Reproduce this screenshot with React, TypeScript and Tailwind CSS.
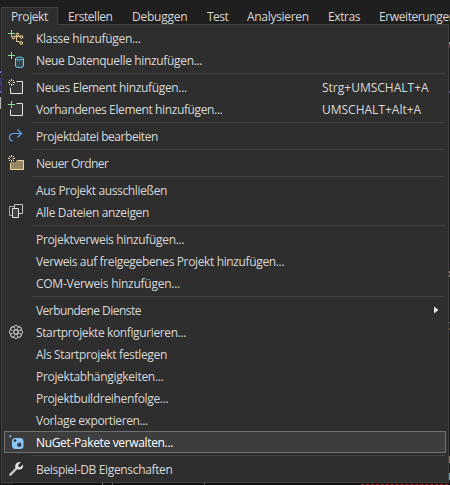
import React from "react";

const font = "font-['Open_Sans','Noto_Sans',sans-serif]";

type Item = { label: string; track: string; icon?: string; keys?: string; arrow?: boolean; active?: boolean };

const menuBar = [
  { label: "Erstellen", box: "w-[64px] tracking-[-0.45px]" },
  { label: "Debuggen", box: "w-[75px] tracking-[-0.25px]" },
  { label: "Test", box: "w-[40px] tracking-[-0.5px]" },
  { label: "Analysieren", box: "w-[81px] tracking-[-0.3px]" },
  { label: "Extras", box: "w-[51px] tracking-[-0.4px]" },
  { label: "Erweiterungen", box: "w-[80px] tracking-[-0.4px]" },
];

const groups: Item[][] = [
  [
    { label: "Klasse hinzufügen...", track: "tracking-[-0.3px]", icon: "class" },
    { label: "Neue Datenquelle hinzufügen...", track: "tracking-[-0.34px]", icon: "db" },
  ],
  [
    { label: "Neues Element hinzufügen...", track: "tracking-[-0.34px]", icon: "new", keys: "Strg+UMSCHALT+A" },
    { label: "Vorhandenes Element hinzufügen...", track: "tracking-[-0.38px]", icon: "existing", keys: "UMSCHALT+Alt+A" },
  ],
  [{ label: "Projektdatei bearbeiten", track: "tracking-[-0.44px]", icon: "redo" }],
  [{ label: "Neuer Ordner", track: "tracking-[-0.5px]", icon: "folder" }],
  [
    { label: "Aus Projekt ausschließen", track: "tracking-[-0.35px]" },
    { label: "Alle Dateien anzeigen", track: "tracking-[-0.34px]", icon: "files" },
  ],
  [
    { label: "Projektverweis hinzufügen...", track: "tracking-[-0.33px]" },
    { label: "Verweis auf freigegebenes Projekt hinzufügen...", track: "tracking-[-0.36px]" },
    { label: "COM-Verweis hinzufügen...", track: "tracking-[-0.26px]" },
  ],
  [
    { label: "Verbundene Dienste", track: "tracking-[-0.55px]", arrow: true },
    { label: "Startprojekte konfigurieren...", track: "tracking-[-0.38px]", icon: "gear" },
    { label: "Als Startprojekt festlegen", track: "tracking-[-0.36px]" },
    { label: "Projektabhängigkeiten...", track: "tracking-[-0.32px]" },
    { label: "Projektbuildreihenfolge...", track: "tracking-[-0.33px]" },
    { label: "Vorlage exportieren...", track: "tracking-[-0.39px]" },
    { label: "NuGet-Pakete verwalten...", track: "tracking-[-0.34px]", icon: "nuget", active: true },
  ],
  [{ label: "Beispiel-DB Eigenschaften", track: "tracking-[-0.34px]", icon: "wrench" }],
];

const Burst = () => (
  <path
    d="M3.500 0v2M3.500 5v2M0 3.500h2M5 3.500h2M1 1l1.400 1.400M4.600 4.600L6 6M6 1L4.600 2.400M2.400 4.600L1 6"
    stroke="#f3dfa8"
  />
);

const Plus = () => <path d="M3.500 0v7M0 3.500h7" stroke="#8ae28a" />;

function Icon({ name }: { name: string }) {
  return (
    <svg width="16" height="16" viewBox="0 0 16 16" fill="none" className="block">
      {name === "class" && (
        <>
          <path d="M6 7.500l4-3.500M8.500 6.500h4M8.500 6.500v5h3" stroke="#efd49a" />
          <circle cx="5.500" cy="7.500" r="1.400" fill="#5b5341" stroke="#efd49a" />
          <circle cx="9.500" cy="4.500" r="1.400" fill="#5b5341" stroke="#efd49a" />
          <circle cx="13.500" cy="7" r="1.400" fill="#5b5341" stroke="#efd49a" />
          <circle cx="13.200" cy="13" r="1.400" fill="#5b5341" stroke="#efd49a" />
          <Plus />
        </>
      )}
      {name === "db" && (
        <>
          <path d="M7.500 6.500v7.500c0 2 8 2 8 0V6.500" fill="#36474f" stroke="#72cdf0" />
          <ellipse cx="11.500" cy="6.500" rx="4" ry="1.400" fill="#2e4148" stroke="#72cdf0" />
          <Plus />
        </>
      )}
      {name === "new" && (
        <>
          <path d="M8 2.500h6.500v12h-12V8" fill="#383838" />
          <path d="M8.500 2.500h6v12h-12V8.500" stroke="#e2e2e2" />
          <Burst />
        </>
      )}
      {name === "existing" && (
        <>
          <path d="M8 2.500h6.500v12h-12V8" fill="#383838" />
          <path d="M8.500 2.500h6v12h-12V8.500" stroke="#e2e2e2" />
          <Plus />
        </>
      )}
      {name === "redo" && (
        <path d="M5 13C2.800 13 1.500 11.600 1.500 9.500C1.500 7 3 5.500 5.500 5.500H13M9.500 1.500l4 4-4 4" stroke="#5aa7ed" strokeWidth="1.200" />
      )}
      {name === "folder" && (
        <>
          <path d="M2.500 8v6.500h13v-9H10L8.500 7H4z" fill="#958564" />
          <path d="M2.500 8v6.500h13v-9H9.500L8 6.500" stroke="#f3d69b" />
          <Burst />
        </>
      )}
      {name === "files" && (
        <>
          <path d="M4 11.500H1.500v-9H6" stroke="#a8a8a8" />
          <path d="M6.500 4V.5h8v9H11" stroke="#c8c8c8" />
          <path d="M4.500 4.500h6v9h-6z" fill="#444" stroke="#e2e2e2" />
        </>
      )}
      {name === "gear" && (
        <g stroke="#e0e0e0">
          {[0, 45, 90, 135, 180, 225, 270, 315].map((a) => (
            <path key={a} transform={`rotate(${a} 8 8)`} d="M6 3.300C5.800.8 10.200.8 10 3.300L9.600 4.600" />
          ))}
          <circle cx="8" cy="8" r="2.300" strokeWidth="1.200" />
        </g>
      )}
      {name === "nuget" && (
        <>
          <circle cx="2.300" cy="2.300" r="1.200" fill="#5f9ccb" />
          <rect x="4" y="4" width="11.500" height="11" rx="3.500" fill="#8dcbfb" />
          <circle cx="7" cy="6.700" r="1.400" fill="#34414d" />
          <circle cx="11.300" cy="10.800" r="2.200" fill="#34414d" />
        </>
      )}
      {name === "wrench" && (
        <>
          <path d="M2.300 13.700L8.500 7.500" stroke="#c9c9c9" strokeWidth="2.400" strokeLinecap="round" />
          <path d="M12.800 1.300L10.300 3.800V6h2.200L15 3.500c.7 2.900-1.300 5.300-4.300 5.200L7.400 7C6.400 3.500 9.600.2 12.800 1.300z" fill="#e4e4e4" />
        </>
      )}
    </svg>
  );
}

const leftEdge = [
  { h: "h-[47px]", c: "bg-[#1f1f1f]" },
  { h: "h-[2px]", c: "bg-[#8060e0]" },
  { h: "h-[5px]", c: "bg-[#1f1f1f]" },
  { h: "h-[8px]", c: "bg-[#36386c]" },
  { h: "h-[5px]", c: "bg-[#28264a]" },
  { h: "h-[2px]", c: "bg-[#8060e0]" },
  { h: "h-[4px]", c: "bg-[#1f1f1f]" },
  { h: "h-[12px]", c: "bg-[#b0b0b0]" },
];

const rightEdge = [
  { h: "h-[18px]", c: "bg-[#141414]" },
  { h: "h-[2px]", c: "bg-[#a0a0a0]" },
  { h: "h-[4px]", c: "bg-[#654037]" },
  { h: "h-[43px]", c: "bg-[#171717]" },
  { h: "h-[2px]", c: "bg-[#5d4fa0]" },
  { h: "h-[178px]", c: "bg-[#161616]" },
  { h: "h-[2px]", c: "bg-[#9a8f88]" },
  { h: "h-[2px]", c: "bg-[#333333]" },
  { h: "h-[2px]", c: "bg-[#8a807a]" },
  { h: "h-[45px]", c: "bg-[#171717]" },
  { h: "h-[1px]", c: "bg-[#777777]" },
  { h: "h-[5px]", c: "bg-[#171717]" },
  { h: "h-[2px]", c: "bg-[#71452e]" },
  { h: "h-[126px]", c: "bg-[#161616]" },
  { h: "h-[7px]", c: "bg-[#92705e]" },
  { h: "h-[10px]", c: "bg-[#161616]" },
  { h: "h-[7px]", c: "bg-[#6e9bad]" },
];

export default function App() {
  return (
    <div className={`flex h-[485px] w-[450px] flex-col overflow-hidden bg-[#1f1f1f] text-[12px] leading-[18px] text-[#d8d8d8] ${font}`}>
      <div className="flex h-[25px] shrink-0 pt-[7px] pl-px whitespace-nowrap">
        <div className="z-10 h-[18px] w-[57px] shrink-0 border border-b-0 border-[#424242] bg-[#2e2e2e] pl-[9px] leading-[17px] tracking-[-0.4px]">Projekt</div>
        <div className="flex shrink-0 pl-[10px] leading-[19px]">
          {menuBar.map((m) => (
            <span key={m.label} className={`shrink-0 ${m.box}`}>{m.label}</span>
          ))}
        </div>
      </div>
      <div className="-mt-px flex h-[459px] shrink-0">
        <div className="w-px shrink-0">
          {leftEdge.map((s, i) => <div key={i} className={`${s.h} ${s.c}`} />)}
        </div>
        <div className="flex w-[448px] shrink-0 flex-col border border-[#424242] bg-[#2e2e2e] py-0.5">
          {groups.map((g, i) => (
            <React.Fragment key={i}>
              {i > 0 && (
                <div className="mr-[3px] ml-[30px] h-[5px] shrink-0 pt-0.5">
                  <div className="h-px bg-[#424242]" />
                </div>
              )}
              {g.map((it) => (
                <div
                  key={it.label}
                  className={`mr-0.5 ml-0.5 flex h-[22px] shrink-0 items-center ${it.active ? "bg-[#3d3d3d] text-white outline outline-1 -outline-offset-1 outline-[#707070]" : ""}`}
                >
                  <div className="ml-1 w-7">{it.icon && <Icon name={it.icon} />}</div>
                  <span className={`pt-0.5 whitespace-nowrap ${it.track}`}>{it.label}</span>
                  {it.keys && <span className="ml-auto w-[124px] pt-0.5">{it.keys}</span>}
                  {it.arrow && (
                    <svg width="5" height="8" viewBox="0 0 5 8" className="mr-[7px] ml-auto">
                      <path d="M0 .5L4.500 4L0 7.500z" fill="#e6e6e6" />
                    </svg>
                  )}
                </div>
              ))}
            </React.Fragment>
          ))}
        </div>
        <div className="w-px shrink-0 bg-[#161616]">
          {rightEdge.map((s, i) => <div key={i} className={`${s.h} ${s.c}`} />)}
        </div>
      </div>
      <div className="flex h-[2px] bg-[#141012]">
        <div className="w-[13px] bg-[#1f1d1e]" />
        <div className="ml-[89px] w-px bg-[#777777]" />
        <div className="ml-[9px] w-px bg-[#555555]" />
        <div className="ml-[91px] w-px bg-[#555555]" />
        <div className="mt-px ml-[156px] w-[87px] border-t border-dashed border-[#b02020]" />
      </div>
    </div>
  );
}
